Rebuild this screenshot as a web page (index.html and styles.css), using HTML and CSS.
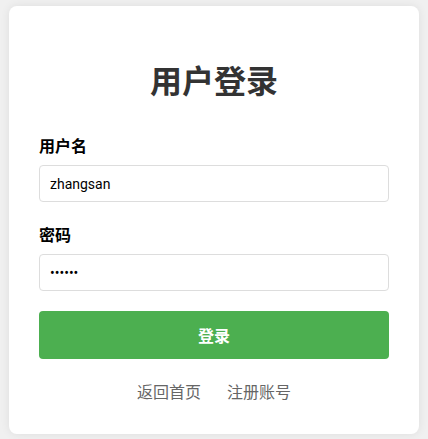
FILE: index.html
```html
<!DOCTYPE html>
<html lang="zh">
<head>
<meta charset="utf-8">
<title>用户登录</title>
<link rel="stylesheet" href="styles.css">
</head>
<body>
<div class="card">
  <h1 class="title">用户登录</h1>
  <form class="form">
    <div class="field">
      <label class="label" for="u">用户名</label>
      <input class="input" id="u" type="text" value="zhangsan">
    </div>
    <div class="field">
      <label class="label" for="p">密码</label>
      <input class="input" id="p" type="password" value="123456">
    </div>
    <button class="btn" type="button">登录</button>
  </form>
  <div class="links">
    <a class="link" href="#">返回首页</a>
    <a class="link" href="#">注册账号</a>
  </div>
</div>
</body>
</html>
```
FILE: styles.css
```css
html, body {
  margin: 0;
  padding: 0;
}
body {
  background: #f0f0f0;
  font-family: Roboto, "Noto Sans CJK SC", sans-serif;
  padding: 6px 9px;
}
.card {
  background: #fff;
  border-radius: 8px;
  box-shadow: 0 0 10px rgba(0,0,0,0.08);
  padding: 30px 30px 33px;
}
.title {
  margin: 24px 0 37px;
  text-align: center;
  font-family: "Noto Sans CJK SC", sans-serif;
  font-size: 32px;
  font-weight: 700;
  color: #333;
  line-height: 1.2;
}
.form {
  display: flex;
  flex-direction: column;
}
.field {
  display: flex;
  flex-direction: column;
  margin-bottom: 22px;
}
.field:last-of-type {
  margin-bottom: 20px;
}
.label {
  font-family: "Noto Sans CJK SC", sans-serif;
  font-size: 16px;
  font-weight: 700;
  color: #000;
  line-height: 20px;
  margin-bottom: 10px;
}
.input {
  box-sizing: border-box;
  height: 37px;
  padding: 0 10px;
  border: 1px solid #ddd;
  border-radius: 4px;
  font-family: Roboto, sans-serif;
  font-size: 14px;
  color: #000;
  outline: none;
}
.btn {
  height: 48px;
  border: none;
  border-radius: 4px;
  background: #4caf50;
  color: #fff;
  font-family: "Noto Sans CJK SC", sans-serif;
  font-size: 16px;
  font-weight: 700;
}
.links {
  display: flex;
  justify-content: center;
  gap: 26px;
  margin-top: 22px;
}
.link {
  font-family: "Noto Sans CJK SC", sans-serif;
  font-size: 16px;
  color: #666;
  text-decoration: none;
  line-height: 20px;
}
```
